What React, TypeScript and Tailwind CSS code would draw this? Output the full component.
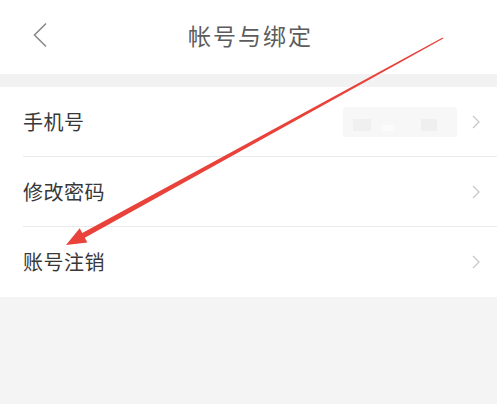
import React from "react";

const rows = [
  { label: "手机号", masked: true },
  { label: "修改密码" },
  { label: "账号注销" },
];

function Chevron({ className = "" }: { className?: string }) {
  return (
    <svg width="10" height="14" viewBox="0 0 10 14" className={className}>
      <path d="M2 1 L8 7 L2 13" fill="none" stroke="#c8c8c8" strokeWidth="1.3" />
    </svg>
  );
}

// tapered red arrow drawn over the screenshot
function Arrow() {
  const start = { x: 443, y: 38 };
  const tip = { x: 66, y: 245 };
  const dx = tip.x - start.x;
  const dy = tip.y - start.y;
  const len = Math.hypot(dx, dy);
  const u = { x: dx / len, y: dy / len };
  const n = { x: -u.y, y: u.x };
  const headLen = 20;
  const headW = 8;
  const base = { x: tip.x - u.x * headLen, y: tip.y - u.y * headLen };
  const w0 = 0.7;
  const w1 = 2.6;
  const pts = [
    [start.x + n.x * w0, start.y + n.y * w0],
    [base.x + n.x * w1, base.y + n.y * w1],
    [base.x + n.x * headW, base.y + n.y * headW],
    [tip.x, tip.y],
    [base.x - n.x * headW, base.y - n.y * headW],
    [base.x - n.x * w1, base.y - n.y * w1],
    [start.x - n.x * w0, start.y - n.y * w0],
  ]
    .map((p) => p.join(","))
    .join(" ");
  return (
    <svg className="absolute left-0 top-0 pointer-events-none" width="497" height="404">
      <polygon points={pts} fill="#e8423a" />
    </svg>
  );
}

export default function App() {
  return (
    <div
      className="relative w-[497px] h-[404px] bg-[#f4f4f4] overflow-hidden"
      style={{ fontFamily: '"Noto Sans CJK SC", "Noto Sans", sans-serif' }}
    >
      <header className="relative h-[74px] bg-white flex items-center justify-center">
        <svg width="16" height="26" viewBox="0 0 16 26" className="absolute left-[32px] top-[22px]">
          <path d="M14 1.5 L2.5 13 L14 24.5" fill="none" stroke="#8a8a8a" strokeWidth="1.6" />
        </svg>
        <h1 className="text-[23px] text-[#5c5c5c] tracking-[2px] mt-[-3px] ml-[4px]">帐号与绑定</h1>
      </header>

      <div className="h-[13px] bg-[#f2f2f2]" />

      <div className="bg-white">
        {rows.map((r, i) => (
          <div key={r.label} className="pl-[23px]">
            <div
              className={
                "h-[70px] flex items-center justify-between pr-[16px] " +
                (i < rows.length - 1 ? "border-b border-[#ebebeb]" : "")
              }
            >
              <span className="text-[20px] text-[#383838] tracking-[0.5px]">{r.label}</span>
              <div className="flex items-center gap-[14px]">
                {r.masked && (
                  <div className="w-[114px] h-[30px] bg-[#f7f7f7] rounded-[3px] flex items-end gap-[10px] px-[10px] pb-[6px]">
                    <div className="w-[18px] h-[12px] bg-[#f0f0f0]" />
                    <div className="w-[14px] h-[6px] bg-[#fbfbfb]" />
                    <div className="w-[16px] h-[12px] bg-[#efefef] ml-[16px]" />
                  </div>
                )}
                <Chevron />
              </div>
            </div>
          </div>
        ))}
      </div>

      <Arrow />
    </div>
  );
}
